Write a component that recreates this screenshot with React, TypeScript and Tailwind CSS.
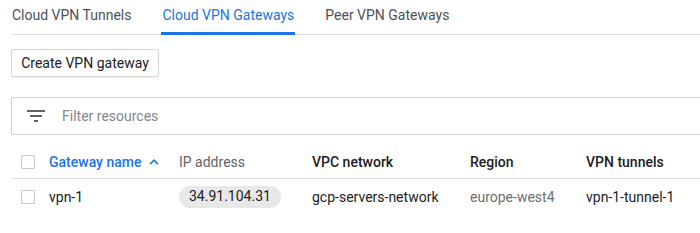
import React from 'react';

// Gateway list page: tabs, create button, filter bar and table
const tabs = ['Cloud VPN Tunnels', 'Cloud VPN Gateways', 'Peer VPN Gateways'];

const Checkbox = () => (
  <span className="block w-[14px] h-[14px] border border-[#c8c8c8] rounded-[1px] bg-white" />
);

const FilterIcon = () => (
  <svg width="24" height="24" viewBox="0 0 24 24" className="fill-[#5f6368]">
    <path d="M10 18h4v-2h-4v2zM3 6v2h18V6H3zm3 7h12v-2H6v2z" />
  </svg>
);

const SortUp = () => (
  <svg width="10" height="6" viewBox="0 0 10 6" className="ml-[8px]">
    <polyline points="1,5.2 5,1.2 9,5.2" fill="none" stroke="#1a73e8" strokeWidth="1.6" />
  </svg>
);

const App: React.FC = () => {
  return (
    <div
      className="w-[700px] h-[233px] overflow-hidden bg-white pl-[11px] text-[14px] text-[#202124]"
      style={{ fontFamily: 'Roboto, "Liberation Sans", sans-serif' }}
    >
      {/* Tabs */}
      <div className="flex gap-[29px] border-b border-[#dadce0]">
        {tabs.map((t, i) => (
          <div
            key={t}
            className={
              i === 1
                ? 'h-[35px] -mb-px flex items-center pb-[1px] border-b-[3px] border-[#1a73e8] text-[#1a73e8]'
                : 'h-[35px] -mb-px flex items-center pb-[1px] border-b-[3px] border-transparent text-[#4d5156]'
            }
          >
            <span className="px-[1px]">{t}</span>
          </div>
        ))}
      </div>

      {/* Create button */}
      <button className="mt-[14px] h-[28px] w-[148px] border border-[#d4d4d4] rounded-[2px] bg-white text-[14px] text-[#202124] shadow-[0_1px_1px_rgba(0,0,0,0.05)]">
        Create VPN gateway
      </button>

      {/* Filter bar */}
      <div className="mt-[20px] w-[720px] h-[38px] border border-[#d0d0d0] flex items-center pl-[12px]">
        <FilterIcon />
        <span className="ml-[14px] text-[#80868b]">Filter resources</span>
      </div>

      {/* Table */}
      <div className="mt-[10px]">
        <div className="grid grid-cols-[38px_130px_133px_158px_116px_1fr] items-center h-[34px] pt-[1px] border-b border-[#dadce0]">
          <div className="pl-[10px]"><Checkbox /></div>
          <div className="flex items-center text-[#1a73e8] font-medium">
            Gateway name
            <SortUp />
          </div>
          <div className="text-[#5f6368]">IP address</div>
          <div className="font-medium">VPC network</div>
          <div className="font-medium">Region</div>
          <div className="font-medium">VPN tunnels</div>
        </div>
        <div className="grid grid-cols-[38px_130px_133px_158px_116px_1fr] items-center h-[36px]">
          <div className="pl-[10px]"><Checkbox /></div>
          <div>vpn-1</div>
          <div>
            <span className="inline-flex items-center h-[22px] px-[10px] rounded-full bg-[#e8e8e8] -mt-[5px]">
              34.91.104.31
            </span>
          </div>
          <div>gcp-servers-network</div>
          <div className="text-[#6b6f73]">europe-west4</div>
          <div>vpn-1-tunnel-1</div>
        </div>
      </div>
    </div>
  );
};

export default App;
